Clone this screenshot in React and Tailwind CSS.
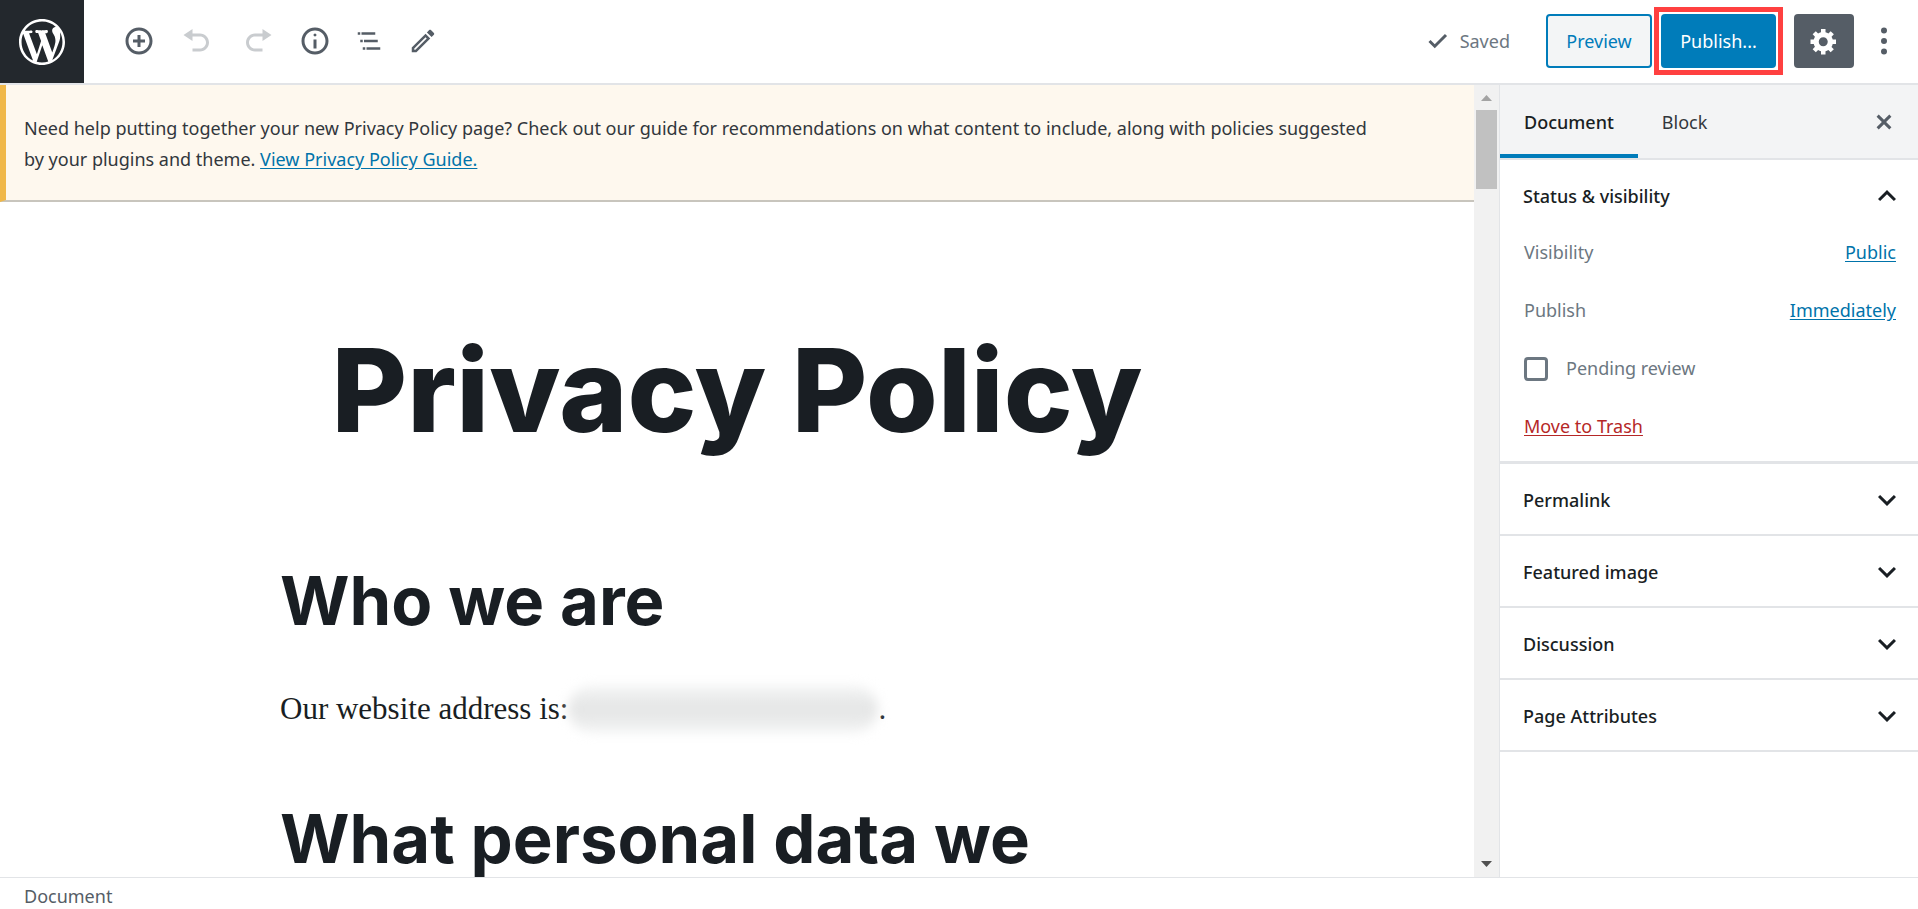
import React, { useState } from 'react';

const Dashicon = ({ d, size = 30, viewBox = '0 0 20 20' }) => (
    <svg width={size} height={size} viewBox={viewBox} fill="currentColor" aria-hidden="true" className="shrink-0">
        <path d={d} />
    </svg>
);

const icons = {
    wordpress: 'M20 10c0-5.51-4.49-10-10-10C4.48 0 0 4.49 0 10c0 5.52 4.48 10 10 10 5.51 0 10-4.48 10-10zM7.78 15.37L4.37 6.22c.55-.02 1.17-.08 1.17-.08.5-.06.44-1.13-.06-1.11 0 0-1.45.11-2.37.11-.18 0-.37 0-.58-.01C4.12 2.69 6.87 1.11 10 1.11c2.33 0 4.45.87 6.05 2.34-.68-.11-1.65.39-1.65 1.58 0 .74.45 1.36.9 2.1.35.61.55 1.36.55 2.46 0 1.49-1.4 5-1.4 5l-3.03-8.37c.54-.02.82-.17.82-.17.5-.05.44-1.25-.06-1.22 0 0-1.44.12-2.38.12-.87 0-2.33-.12-2.33-.12-.5-.03-.56 1.2-.06 1.22l.92.08 1.26 3.41zM17.41 10c.24-.64.74-1.87.43-4.25.7 1.29 1.05 2.71 1.05 4.25 0 3.29-1.73 6.24-4.4 7.78.97-2.59 1.94-5.2 2.92-7.78zM6.1 18.09C3.12 16.65 1.11 13.53 1.11 10c0-1.3.23-2.48.72-3.59C3.25 10.3 4.67 14.2 6.1 18.09zm4.03-6.63l2.58 6.98c-.86.29-1.76.45-2.71.45-.79 0-1.57-.11-2.29-.33.81-2.38 1.62-4.74 2.42-7.1z',
    insert: 'M10 1c-5 0-9 4-9 9s4 9 9 9 9-4 9-9-4-9-9-9zm0 16c-3.9 0-7-3.1-7-7s3.1-7 7-7 7 3.1 7 7-3.1 7-7 7zm1-11H9v3H6v2h3v3h2v-3h3V9h-3V6z',
    undo: 'M12 5H7V2L1 6l6 4V7h5c2.2 0 4 1.8 4 4s-1.8 4-4 4H7v2h5c3.3 0 6-2.7 6-6s-2.7-6-6-6z',
    redo: 'M8 5h5V2l6 4-6 4V7H8c-2.2 0-4 1.8-4 4s1.8 4 4 4h5v2H8c-3.3 0-6-2.7-6-6s2.7-6 6-6z',
    info: 'M9 15h2V9H9v6zm1-10c-.5 0-1 .5-1 1s.5 1 1 1 1-.5 1-1-.5-1-1-1zm0-4c-5 0-9 4-9 9s4 9 9 9 9-4 9-9-4-9-9-9zm0 16c-3.9 0-7-3.1-7-7s3.1-7 7-7 7 3.1 7 7-3.1 7-7 7z',
    outline: 'M5 5H3v2h2V5zm3 8h11v-2H8v2zm9-8H6v2h11V5zM7 11H5v2h2v-2zm0 8h2v-2H7v2zm3-2v2h11v-2H10z',
    edit: 'M14.06 9.02l.92.92L5.92 19H5v-.92l9.06-9.06M17.66 3c-.25 0-.51.1-.7.29l-1.83 1.83 3.75 3.75 1.83-1.83c.39-.39.39-1.02 0-1.41l-2.34-2.34c-.2-.2-.45-.29-.71-.29zm-3.6 3.19L3 17.25V21h3.75L17.81 9.94l-3.75-3.75z',
    saved: 'M15.3 5.3l-6.8 6.8-2.8-2.8-1.4 1.4 4.2 4.2 8.2-8.2',
    settings: 'M18 12h-2.18c-.17.7-.44 1.35-.81 1.93l1.54 1.54-2.1 2.1-1.54-1.54c-.58.36-1.23.63-1.91.79V19H8v-2.18c-.68-.16-1.33-.43-1.91-.79l-1.54 1.54-2.12-2.12 1.54-1.54c-.36-.58-.63-1.23-.79-1.91H1V9.03h2.17c.16-.7.44-1.35.8-1.94L2.43 5.55l2.1-2.1 1.54 1.54c.58-.37 1.24-.64 1.93-.81V2h3v2.18c.68.16 1.33.43 1.91.79l1.54-1.54 2.12 2.12-1.54 1.54c.36.59.64 1.24.8 1.94H18V12zm-8.5 1.5c1.66 0 3-1.34 3-3s-1.34-3-3-3-3 1.34-3 3 1.34 3 3 3z',
    close: 'M14.95 6.46L11.41 10l3.54 3.54-1.41 1.41L10 11.42l-3.53 3.53-1.42-1.42L8.58 10 5.05 6.47l1.42-1.42L10 8.58l3.54-3.53z',
    more: 'M10 1a2 2 0 1 0 0 4 2 2 0 0 0 0-4zm0 7a2 2 0 1 0 0 4 2 2 0 0 0 0-4zm0 7a2 2 0 1 0 0 4 2 2 0 0 0 0-4z',
    down: 'M7.41 8.59L12 13.17l4.59-4.58L18 10l-6 6-6-6z',
    up: 'M12 8l-6 6 1.41 1.41L12 10.83l4.59 4.58L18 14z',
};

const tools = [
    { label: 'Add block', icon: icons.insert },
    { label: 'Undo', icon: icons.undo, disabled: true },
    { label: 'Redo', icon: icons.redo, disabled: true },
    { label: 'Content structure', icon: icons.info },
    { label: 'Block navigation', icon: icons.outline, viewBox: '0 0 24 24' },
    { label: 'Modes', icon: icons.edit, viewBox: '0 0 24 24' },
];

const panels = ['Permalink', 'Featured image', 'Discussion', 'Page Attributes'];

const Header = () => (
    <header className="flex shrink-0 items-center border-b-2 border-[#e2e4e7] bg-white">
        <a href="#pages" aria-label="View Pages" className="flex h-[83px] w-[84px] items-center justify-center bg-[#23282d] text-white">
            <Dashicon d={icons.wordpress} size={46} />
        </a>
        <div className="ml-7 flex flex-1 items-center pb-px">
            {tools.map((tool) => (
                <button
                    key={tool.label}
                    type="button"
                    aria-label={tool.label}
                    disabled={tool.disabled}
                    className="flex h-[54px] w-[54px] items-center justify-center text-[#555d66] disabled:w-[61px] disabled:text-[#c9cccf]"
                >
                    <Dashicon d={tool.icon} viewBox={tool.viewBox} />
                </button>
            ))}
        </div>
        <div className="flex items-center pr-4 pb-px">
            <span className="mr-9 flex items-center gap-2 text-[#6c7781]">
                <span className="text-[#555d66]"><Dashicon d={icons.saved} /></span>
                Saved
            </span>
            <button type="button" className="h-[54px] w-[106px] rounded border-2 border-[#007cba] bg-[#f3f5f6] text-[#007cba]">
                Preview
            </button>
            <div className="mr-[11px] ml-[2px] border-[5px] border-[#ff4040] p-[2px]">
                <button type="button" className="h-[54px] w-[115px] rounded bg-[#007cba] text-white">
                    Publish...
                </button>
            </div>
            <button type="button" aria-label="Settings" className="flex h-[54px] w-[60px] items-center justify-center rounded bg-[#555d66] text-white">
                <Dashicon d={icons.settings} />
            </button>
            <button type="button" aria-label="More tools" className="ml-3 flex h-[54px] w-9 items-center justify-center text-[#555d66]">
                <Dashicon d={icons.more} />
            </button>
        </div>
    </header>
);

const Editor = () => (
    <main className="flex min-w-0 flex-1">
        <div className="min-w-0 flex-1 overflow-hidden">
            <div className="border-b-2 border-l-[6px] border-b-[#c8c5bd] border-l-[#f0b849] bg-[#fef8ee] pt-7 pr-[88px] pb-[25px] pl-[18px] text-[#32373c]">
                <p className="leading-[31px]">
                    Need help putting together your new Privacy Policy page? Check out our guide for recommendations on what content to include, along with policies suggested by your plugins and theme.{' '}
                    <a href="#guide" className="text-[#0073aa] underline underline-offset-2">View Privacy Policy Guide.</a>
                </p>
            </div>
            <article className="mx-auto max-w-[914px] text-[#191e23]">
                <h1 className="pt-[118px] text-center font-['Inter',sans-serif] text-[116px] leading-[140px] font-extrabold whitespace-nowrap">
                    Privacy Policy
                </h1>
                <h2 className="mt-24 font-['Inter',sans-serif] text-[67px] leading-[90px] font-bold">Who we are</h2>
                <p className="mt-10 flex items-center font-['Liberation_Serif',serif] text-[31px] leading-[46px]">
                    Our website address is:
                    <span className="h-[46px] w-[310px] rounded-full bg-linear-to-b from-[#f3f4f4] via-[#e4e5e5] to-[#f1f2f2] blur-[6px]" />
                    .
                </p>
                <h2 className="mt-[62px] font-['Inter',sans-serif] text-[67px] leading-[90px] font-bold whitespace-nowrap">What personal data we</h2>
            </article>
        </div>
        <div className="flex w-[25px] shrink-0 flex-col items-center bg-[#f1f1f1]">
            <svg width="11" height="6" viewBox="0 0 11 6" className="mt-[10px] mb-[9px] shrink-0 text-[#a3a3a3]">
                <path d="M0 6L5.5 0 11 6z" fill="currentColor" />
            </svg>
            <div className="h-[79px] w-[21px] bg-[#c1c1c1]" />
            <svg width="11" height="6" viewBox="0 0 11 6" className="mt-auto mb-[10px] shrink-0 text-[#505050]">
                <path d="M0 0h11L5.5 6z" fill="currentColor" />
            </svg>
        </div>
    </main>
);

const Sidebar = () => {
    const [tab, setTab] = useState('Document');
    const [pending, setPending] = useState(false);

    return (
        <aside className="w-[419px] shrink-0 border-l border-[#e2e4e7] bg-white">
            <div className="flex h-[75px] border-b-2 border-[#e2e4e7] bg-[#f3f4f5]">
                {['Document', 'Block'].map((name) => (
                    <button
                        key={name}
                        type="button"
                        aria-pressed={tab === name}
                        onClick={() => setTab(name)}
                        className="border-b-4 border-transparent px-6 pt-1.5 text-[#32373c] aria-pressed:border-[#007cba] aria-pressed:font-medium aria-pressed:text-[#191e23]"
                    >
                        {name}
                    </button>
                ))}
                <button type="button" aria-label="Close settings" className="mr-[19px] ml-auto text-[#555d66]">
                    <Dashicon d={icons.close} />
                </button>
            </div>

            <section className="border-b-[3px] border-[#e2e4e7] pb-[21px]">
                <h2>
                    <button type="button" className="flex h-[72px] w-full items-center justify-between pr-[13px] pl-[23px] font-medium text-[#191e23]">
                        Status &amp; visibility
                        <Dashicon d={icons.up} size={36} viewBox="0 0 24 24" />
                    </button>
                </h2>
                <div className="flex flex-col gap-[31px] pt-[7px] pr-[22px] pl-6 leading-[27px] text-[#6c7781]">
                    <div className="flex justify-between">
                        <span>Visibility</span>
                        <button type="button" className="text-[#0073aa] underline underline-offset-2">Public</button>
                    </div>
                    <div className="flex justify-between">
                        <span>Publish</span>
                        <button type="button" className="text-[#0073aa] underline underline-offset-2">Immediately</button>
                    </div>
                    <label className="flex items-center gap-[18px]">
                        <input
                            type="checkbox"
                            checked={pending}
                            onChange={(e) => setPending(e.target.checked)}
                            className="h-6 w-6 appearance-none rounded border-[3px] border-[#6c7781] bg-white checked:bg-[#11a0d2]"
                        />
                        Pending review
                    </label>
                    <button type="button" className="self-start text-[#b52727] underline underline-offset-2">Move to Trash</button>
                </div>
            </section>

            {panels.map((panel) => (
                <section key={panel} className="border-b-2 border-[#e2e4e7]">
                    <h2>
                        <button type="button" className="flex h-[70px] w-full items-center justify-between pt-0.5 pr-[13px] pl-[23px] font-medium text-[#191e23]">
                            {panel}
                            <Dashicon d={icons.down} size={36} viewBox="0 0 24 24" />
                        </button>
                    </h2>
                </section>
            ))}
        </aside>
    );
};

const App = () => (
    <div className="flex h-screen flex-col overflow-hidden bg-white font-['Noto_Sans',sans-serif] text-[18px]">
        <Header />
        <div className="flex min-h-0 flex-1">
            <Editor />
            <Sidebar />
        </div>
        <footer className="shrink-0 border-t border-[#e2e4e7] pt-1.5 pl-6 leading-[25px] text-[#555d66]">Document</footer>
    </div>
);

export default App;
